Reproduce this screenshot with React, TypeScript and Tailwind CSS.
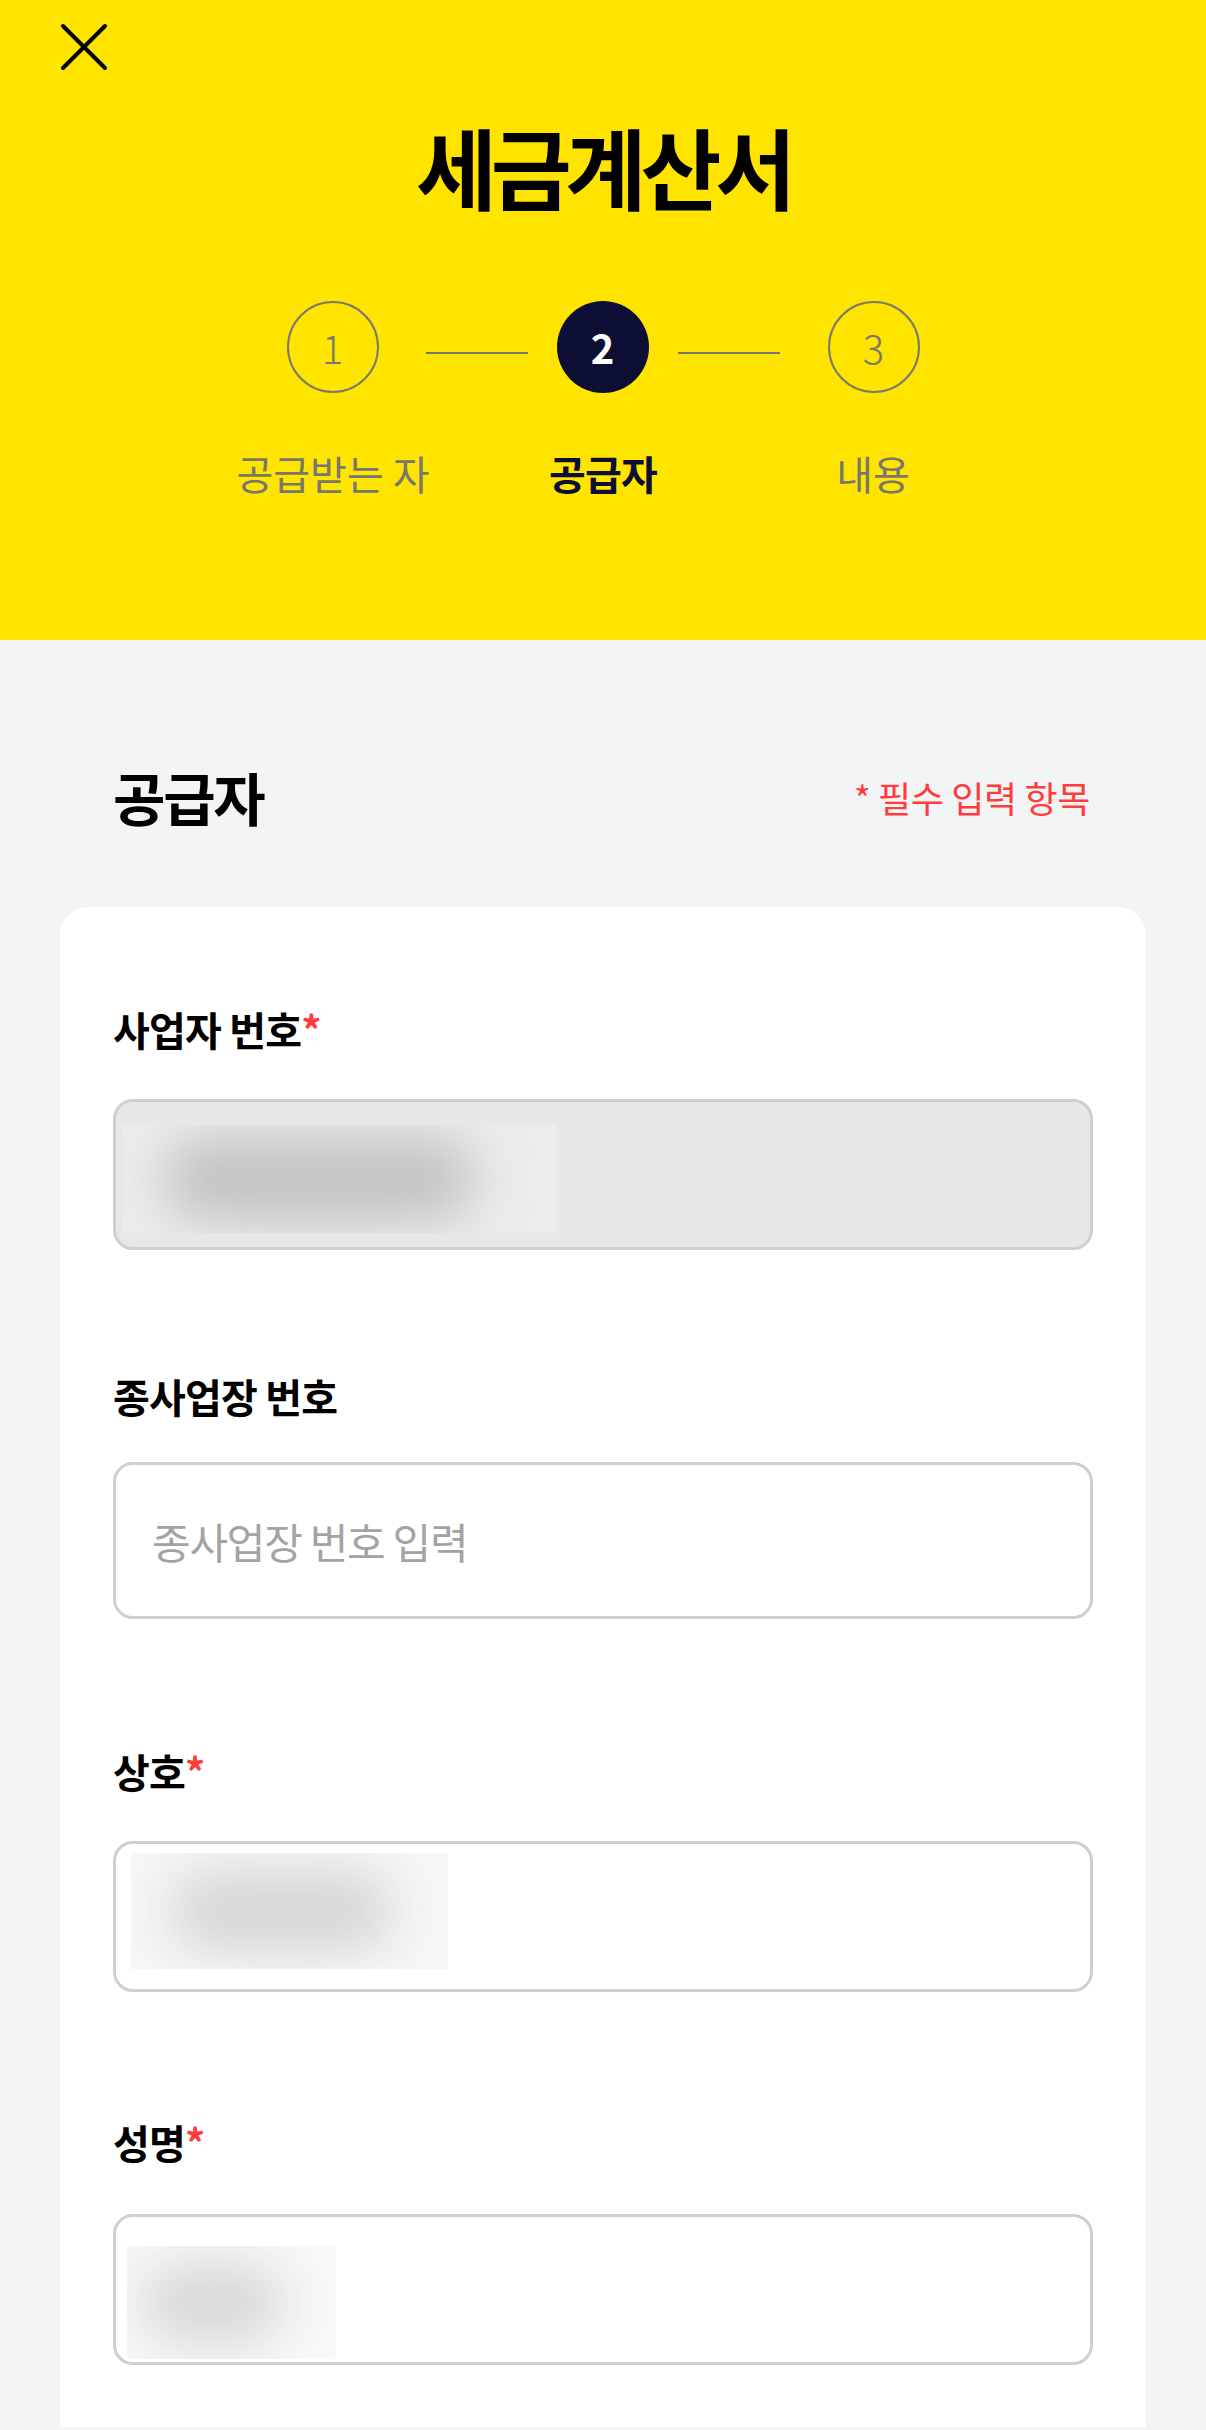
const font = { fontFamily: '"Noto Sans CJK KR", "Noto Sans", sans-serif' }

type Step = { no: number; label: string; state: 'done' | 'active' | 'todo' }

const steps: Step[] = [
  { no: 1, label: '공급받는 자', state: 'done' },
  { no: 2, label: '공급자', state: 'active' },
  { no: 3, label: '내용', state: 'todo' },
]

function CloseIcon() {
  return (
    <svg width="48" height="48" viewBox="0 0 48 48" fill="none">
      <path d="M3 3L45 45M45 3L3 45" stroke="#000" strokeWidth="4" strokeLinecap="round" />
    </svg>
  )
}

function StepCircle({ step }: { step: Step }) {
  if (step.state === 'active') {
    return (
      <div className="flex h-[92px] w-[92px] items-center justify-center rounded-full bg-[#0c0f33] text-[40px] font-bold text-white">
        {step.no}
      </div>
    )
  }
  return (
    <div className="flex h-[92px] w-[92px] items-center justify-center rounded-full border-2 border-[#7a7a6a] text-[40px] font-light text-[#77776c]">
      {step.no}
    </div>
  )
}

function Label({ text, required, className }: { text: string; required?: boolean; className: string }) {
  return (
    <div className={`text-[40px] font-bold leading-[44px] tracking-[-0.02em] text-black ${className}`}>
      {text}
      {required ? <span className="text-[#ff3b3b]">*</span> : null}
    </div>
  )
}

// masked value: light box with a soft grey smear
function Blurred({ w, h, blob, tone, left }: { w: number; h: number; blob: string; tone: string; left: number }) {
  return (
    <div className={`flex items-center overflow-hidden ${tone}`} style={{ width: w, height: h }}>
      <div className={`h-[84px] shrink-0 rounded-full blur-[26px] ${blob}`} style={{ width: w * 0.72, marginLeft: left }} />
    </div>
  )
}

export default function App() {
  return (
    <div className="min-h-[2430px] w-full bg-[#f3f4f6]" style={font}>
      <header className="flex h-[640px] flex-col bg-[#ffe400]">
        <div className="pl-[60px] pt-[23px]">
          <CloseIcon />
        </div>
        <h1 className="mt-[50px] text-center text-[88px] font-bold leading-none tracking-[-0.07em] text-black">
          세금계산서
        </h1>
        <div className="mt-[92px] flex items-center justify-center">
          <StepCircle step={steps[0]} />
          <div className="ml-[47px] mr-[29px] mt-[12px] h-[2px] w-[102px] bg-[#77776c]" />
          <StepCircle step={steps[1]} />
          <div className="ml-[29px] mr-[48px] mt-[12px] h-[2px] w-[102px] bg-[#77776c]" />
          <StepCircle step={steps[2]} />
        </div>
        <div className="mt-[60px] flex justify-center">
          {steps.map((s) => (
            <div
              key={s.no}
              className={`w-[270px] text-center text-[40px] leading-none ${
                s.state === 'active' ? 'font-bold tracking-[-0.02em] text-[#0c0f33]' : 'text-[#77776c]'
              }`}
            >
              {s.label}
            </div>
          ))}
        </div>
      </header>

      <main className="pt-[128px]">
        <div className="flex items-center justify-between pl-[113px] pr-[116px]">
          <h2 className="text-[57px] font-bold leading-none tracking-[-0.04em] text-black">공급자</h2>
          <p className="text-[36px] leading-none tracking-[-0.01em] text-[#ff3b3b]">* 필수 입력 항목</p>
        </div>

        <section className="mx-[60px] mt-[82px] min-h-[1520px] rounded-t-[28px] bg-white px-[53px] pt-[100px]">
          <Label text="사업자 번호" required className="" />
          <div className="mt-[48px] flex h-[151px] items-start rounded-[20px] border-[3px] border-[#cfcfcf] bg-[#e7e7e7] pl-[7px] pt-[23px]">
            <Blurred w={433} h={108} tone="bg-[#ececec]" blob="bg-[#c2c2c2]" left={40} />
          </div>

          <Label text="종사업장 번호" className="mt-[124px]" />
          <div className="mt-[44px] flex h-[157px] items-center rounded-[20px] border-[3px] border-[#cfcfcf] bg-white">
            <input
              readOnly
              placeholder="종사업장 번호 입력"
              className="w-full bg-transparent pl-[36px] text-[42px] tracking-[-0.03em] text-black outline-none placeholder:text-[#a3a3a3]"
            />
          </div>

          <Label text="상호" required className="mt-[130px]" />
          <div className="mt-[48px] flex h-[151px] items-start rounded-[20px] border-[3px] border-[#cfcfcf] bg-white pl-[15px] pt-[9px]">
            <Blurred w={317} h={116} tone="bg-[#f7f7f7]" blob="bg-[#d6d6d6]" left={36} />
          </div>

          <Label text="성명" required className="mt-[128px]" />
          <div className="mt-[50px] flex h-[151px] items-start rounded-[20px] border-[3px] border-[#cfcfcf] bg-white pl-[11px] pt-[29px]">
            <Blurred w={209} h={113} tone="bg-[#f9f9f9]" blob="bg-[#d8d8d8]" left={10} />
          </div>
        </section>
      </main>
    </div>
  )
}
